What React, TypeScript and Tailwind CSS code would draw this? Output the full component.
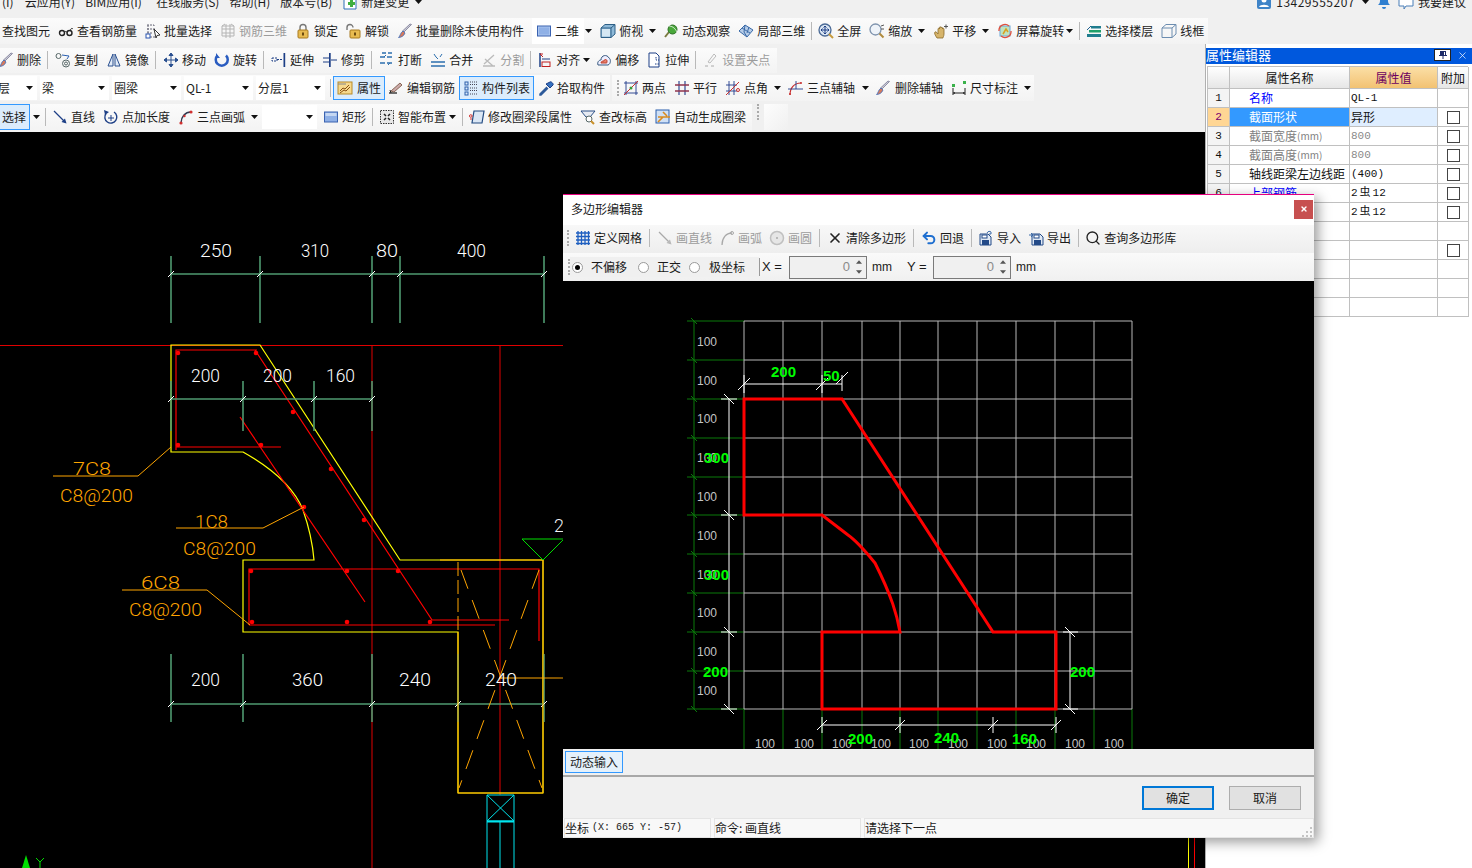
import React from "react";
import { X as XIcon, Search, Undo2 } from "lucide-react";

const S = ({ children, className = "w-4 h-4" }: { children: React.ReactNode; className?: string }) => (
  <svg viewBox="0 0 16 16" className={`${className} shrink-0`} fill="none">{children}</svg>
);

const Ic: Record<string, React.ReactNode> = {
  glasses: <S><circle cx="4" cy="10" r="2.5" stroke="#222" strokeWidth="1.4" /><circle cx="11.5" cy="10" r="2.5" stroke="#222" strokeWidth="1.4" /><path d="M6.5 9.5C8 8 8 8 9 9.5M12 8C13 5 14 5 15 6" stroke="#222" /></S>,
  batch: <S><path d="M2 2h7v2M2 6h9M2 10h5M2 14h9M3 2v12" stroke="#667" strokeDasharray="2 1" /><rect x="1" y="11" width="4" height="4" fill="#fff" stroke="#2a55b0" /><path d="M9 6l6 6-3 .5-1 2.5z" fill="#fff" stroke="#333" /></S>,
  grid3d: <S><path d="M2 3h12v10H2zM6 1v14M10 1v14M2 6h12M2 10h12M2 3l3-2M14 3l-3-2" stroke="#b5b5b5" /></S>,
  lock: <S><path d="M5 7V4.5a3 3 0 016 0V7" stroke="#777" strokeWidth="1.4" /><rect x="3" y="7" width="10" height="8" rx="1" fill="#e8bb50" stroke="#a87a20" /><rect x="7" y="9.5" width="2" height="3" fill="#6b4a10" /></S>,
  unlock: <S><path d="M1 7V4.5a3 3 0 016 0" stroke="#777" strokeWidth="1.4" /><rect x="4" y="7" width="10" height="8" rx="1" fill="#e8bb50" stroke="#a87a20" /><rect x="8" y="9.5" width="2" height="3" fill="#6b4a10" /></S>,
  brush: <S><path d="M14.5 1.5L7 9l-1.5-1L13 1z" fill="#c9c9d6" stroke="#6b6b88" strokeWidth=".7" /><path d="M6 8l2 2c-1 3-4 4.5-6.5 4.5C3.5 13 3 10 6 8z" fill="#d77a5c" stroke="#3c6fbe" strokeWidth=".8" /></S>,
  box2d: <S><rect x="1.5" y="3" width="13" height="10" fill="#a9c4ef" stroke="#3a62b0" /><rect x="3" y="4.5" width="10" height="7" fill="#8fb0e6" /></S>,
  cube: <S><path d="M1 5l4-3.500h10V11l-4 3.500H1z" fill="#8eb9d8" stroke="#2d5f86" /><path d="M1 5h10v9.500M11 5l4-3.500" stroke="#2d5f86" /><rect x="2" y="6" width="8" height="7.500" fill="#d5e7f3" /></S>,
  orbit: <S><path d="M2 14L6 9" stroke="#7a7a40" strokeWidth="2" /><circle cx="9.5" cy="6.5" r="4.5" fill="#49a83b" stroke="#2d6e25" /><path d="M6 3c3 0 6 2 8 6" stroke="#fff" strokeWidth=".8" /></S>,
  local3d: <S><path d="M1 8l6-6 8 5-6 7z" fill="#b7cde8" stroke="#3a6aa8" /><path d="M4 5l8 5M7 2l-1 7 3 5M11 4l-2 6" stroke="#3a6aa8" /></S>,
  fullscreen: <S><circle cx="7" cy="7" r="6" fill="#dbe6f3" stroke="#4b6a96" strokeWidth="1.3" /><path d="M7 3v8M3 7h8M5.5 4.5L7 3l1.5 1.5M5.5 9.5L7 11l1.5-1.5M4.5 5.5L3 7l1.5 1.5M9.5 5.5L11 7l-1.5 1.5" stroke="#1d3f86" /><path d="M11 11l4 4" stroke="#c79a3c" strokeWidth="2" /></S>,
  zoom: <S><circle cx="6.5" cy="6.5" r="5.5" fill="#eef3f9" stroke="#7e93ad" strokeWidth="1.3" /><path d="M10.5 10.5l4 4" stroke="#b08a3c" strokeWidth="2" /><path d="M12 3l3-1M12 6h3" stroke="#555" /></S>,
  pan: <S><path d="M4 15C2 12 1 10 2 9s2 1 3 2V6c0-1 1.500-1 1.500 0V4.500c0-1 1.500-1 1.500 0V5c0-1 1.500-1 1.500 0v1c0-1 1.500-1 1.500 0v5c0 2-1 3-1 4z" fill="#d6b46a" stroke="#8a6a28" strokeWidth=".8" /><path d="M11 3.500h4M13 1.500v4" stroke="#555" /></S>,
  rotscreen: <S><rect x="3" y="3" width="10" height="10" fill="#bfe3bf" stroke="#6aa5d8" /><path d="M6 11l3-5 2 3" stroke="#d8a020" strokeWidth="1.500" /><path d="M2 8a6 6 0 0110-5M14 8a6 6 0 01-10 5" stroke="#e0503c" strokeWidth="1.300" /></S>,
  floors: <S><path d="M1 11h14v3H1z" fill="#1f7d8e" /><path d="M3 7h12v2.500H3z" fill="#1fa06a" /><path d="M5 3h10v2.500H5z" fill="#1f7d8e" /><path d="M1 7l4-4" stroke="#1f5f8e" /></S>,
  wire: <S><path d="M1 5l4-3.500h10V11l-4 3.500H1zM1 5h10v9.500M11 5l4-3.500" stroke="#6c8db0" /></S>,
  copy: <S><circle cx="3.500" cy="4" r="2.500" stroke="#566" /><circle cx="11" cy="11.500" r="3.500" stroke="#566" /><circle cx="11" cy="11.500" r="1.500" stroke="#566" /><path d="M7 3l7 1-2 3" stroke="#2a5fb0" /></S>,
  mirror: <S><path d="M7 2L2 14h5zM9 2l5 12H9z" stroke="#2a5090" fill="#e3ecf8" /></S>,
  move: <S><path d="M8 1v14M1 8h14M8 1L6 3.500h4zM8 15l-2-2.500h4zM1 8l2.500-2v4zM15 8l-2.500-2v4z" stroke="#2a5090" fill="#2a5090" /></S>,
  rot: <S><path d="M12 3.500a6 6 0 11-8.500 0" stroke="#2a5cc0" strokeWidth="2.500" /><path d="M2 1v5h4z" fill="#2a5cc0" /></S>,
  extend: <S><rect x="12.500" y="1" width="1.700" height="14" fill="#1d3f86" /><path d="M1 6h5v3H1zM6 7.500h6" stroke="#1d3f86" strokeDasharray="2 1" /></S>,
  trim: <S><rect x="7" y="1" width="1.700" height="14" fill="#1d3f86" /><path d="M1 6h6M1 10h6M9 8h6" stroke="#1d3f86" /></S>,
  break: <S><path d="M1 5h14M1 11h14M3 1h4M9 1h4" stroke="#2c6fae" strokeWidth="1.300" strokeDasharray="5 2" /><path d="M7 3l-2 2M9 13l2-2" stroke="#2c6fae" /></S>,
  merge: <S><path d="M1 10h14M1 14h14" stroke="#2c6fae" strokeWidth="1.300" /><path d="M4 2l2 3M12 2l-2 3M6 5l2 2" stroke="#2c6fae" /></S>,
  split: <S><path d="M2 14h12M3 12L13 3M4 7l8 7" stroke="#bbb" strokeWidth="1.300" /></S>,
  align: <S><path d="M3 1v14" stroke="#1d3f86" strokeWidth="1.500" /><path d="M6 5l-3-3M3 2l3 0" stroke="#c02020" /><rect x="5" y="10" width="8" height="4.500" stroke="#c02020" /><path d="M5 7h8" stroke="#1d3f86" /></S>,
  offset: <S><path d="M2 13c-1-3 1-5 3-5 0-5 6-6 8-2 2 1 2 6-1 7z" stroke="#385a80" fill="#eef" /><path d="M5 11c0-2 2-2 3-2 0-2 3-2 3 0s0 2-1 2z" fill="#e8806a" stroke="#c04030" /></S>,
  stretch: <S><path d="M3 1h7l3 3v11H3z" stroke="#1d3f86" fill="#fff" /><path d="M10 5v3h3M9 12h4" stroke="#1d3f86" strokeDasharray="1.500 1" /></S>,
  grippt: <S><path d="M2 14h3M8 14h3" stroke="#aaa" /><path d="M11 2l-6 8 2 1 6-7z" stroke="#bbb" /></S>,
  attr: <S><rect x="1" y="2" width="14" height="12" fill="#f6d98d" stroke="#b88a28" /><path d="M3 11l3-3 2 1 4-4M3 13l4-3 2 1 4-4" stroke="#8a5010" /><path d="M1 4h8" stroke="#888" /></S>,
  editbar: <S><path d="M1 13h8" stroke="#222" strokeWidth="1.300" /><path d="M3 11l9-8 2 2-8 7z" fill="#caa" stroke="#865" /><path d="M2 10l1 3" stroke="#222" /></S>,
  list: <S><rect x="2" y="2" width="3" height="3" stroke="#2c5faa" /><rect x="2" y="7" width="3" height="3" stroke="#2c5faa" /><rect x="2" y="12" width="3" height="3" stroke="#2c5faa" /><path d="M7 2h7M7 4.500h7M7 8h7M7 10.500h7M7 14h7" stroke="#445" strokeDasharray="1 1" /></S>,
  pick: <S><path d="M9 7l-7 7v1h1l7-7" stroke="#2d5a9a" strokeWidth="1.500" /><path d="M8 4l4 4 3-3c1-1-2-4-3-3z" fill="#3672c0" stroke="#1d3f86" /></S>,
  twopt: <S><path d="M3 1v14M13 1v14M1 3h14M1 13h14" stroke="#203a8a" strokeWidth=".9" /><path d="M1 15L15 1" stroke="#c83030" /><circle cx="8" cy="8" r="1.500" fill="#3a9a3a" /></S>,
  para: <S><path d="M5 1v14M11 1v14M1 5h14M1 11h14" stroke="#203a8a" strokeWidth="1.100" /><path d="M1 5h14M1 11h14" stroke="#c83030" /></S>,
  angle: <S><path d="M4 1v14M9 1v14M1 5h11M1 11h11" stroke="#203a8a" strokeWidth=".9" /><path d="M1 15L14 2" stroke="#c83030" /><circle cx="13" cy="10" r="1.500" stroke="#c83030" /></S>,
  arc3: <S><path d="M3 15C3 8 7 3 14 3" stroke="#c83030" strokeWidth="1.200" /><path d="M1 9h15M9 1v8" stroke="#203a8a" strokeWidth=".9" /><circle cx="3" cy="14" r="1" fill="#c83030" /><circle cx="14" cy="3" r="1" fill="#c83030" /></S>,
  dim: <S><path d="M2 8v7M14 8v7M2 13h12" stroke="#222" /><path d="M2 13l2-1v2zM14 13l-2-1v2z" fill="#222" /><rect x="1" y="4" width="3" height="3" fill="#3ab24a" /><rect x="12" y="1" width="3" height="3" fill="#3ab24a" /></S>,
  line: <S><path d="M2 2l11 11" stroke="#1d3f86" strokeWidth="1.300" /><path d="M14.500 14.500l-5-1.500 3.500-3.500z" fill="#1d3f86" /></S>,
  addlen: <S><path d="M11 3a6 6 0 11-8 1.500" stroke="#1d3f86" strokeWidth="1.400" /><path d="M1 1l1 5 4-3z" fill="#1d3f86" /><path d="M8 6v6M5 9h6" stroke="#1d3f86" /></S>,
  arcred: <S><path d="M3 14C3 8 7 3 13 3" stroke="#303a50" strokeWidth="1.400" /><circle cx="3" cy="14" r="1.600" fill="#d03030" /><circle cx="13" cy="3" r="1.600" fill="#d03030" /><circle cx="6.500" cy="7" r="1.200" fill="#d03030" /></S>,
  rect: <S><rect x="1.500" y="3" width="13" height="10" fill="#8fb0e6" stroke="#3a62b0" /><rect x="2.500" y="4" width="11" height="3" fill="#c5d7f2" /></S>,
  smart: <S><rect x="1.500" y="1.500" width="13" height="13" fill="#e8e8e8" stroke="#333" strokeDasharray="1.500 1" /><path d="M5 5l2 2M11 5L9 7M5 11l2-2M11 11L9 9" stroke="#222" strokeWidth="1.500" /></S>,
  modbeam: <S><path d="M5 2h10l-2 12H3z" fill="#dbe7f5" stroke="#224a80" strokeWidth="1.200" /><circle cx="1.800" cy="7" r="1.300" stroke="#d03030" /><path d="M1 10h2" stroke="#d03030" /></S>,
  elev: <S><path d="M1 2h14l-5 6H6z" fill="#e6eaf2" stroke="#2a4f86" /><circle cx="9" cy="10" r="3" fill="#fff" stroke="#566" /><path d="M11 12l3 3" stroke="#c9902a" strokeWidth="2" /></S>,
  auto: <S><rect x="1" y="1" width="13" height="13" fill="#cfe0f5" stroke="#2a5fae" /><path d="M3 8h12M8 3l4 4M3 13l5-5" stroke="#d88a20" strokeWidth="1.600" /></S>,
  gridBlue: <S><path d="M3 1v14M6.500 1v14M10 1v14M13.500 1v14M1 3h14M1 6.500h14M1 10h14M1 13.500h14" stroke="#1f5fc0" strokeWidth="1.300" /></S>,
  lineGray: <S><path d="M2 2l11 11" stroke="#a9a9a9" strokeWidth="1.300" /><path d="M14.500 14.500l-5-1.500 3.500-3.500z" fill="#b9b9b9" /></S>,
  arcGray: <S><path d="M3 15C3 8 7 3 13 3" stroke="#a9a9a9" strokeWidth="1.300" /><circle cx="13" cy="3" r="1.500" stroke="#a9a9a9" /></S>,
  circGray: <S><circle cx="8" cy="8" r="6.500" fill="#e6e6e6" stroke="#c0c0c0" strokeWidth="1.500" /><circle cx="8" cy="8" r="1" fill="#aaa" /></S>,
  imp: <S><path d="M2 4h8l3 3v8H2z" fill="#dfe8f4" stroke="#234a88" /><rect x="4" y="10" width="7" height="5" fill="#234a88" /><rect x="4" y="5" width="5" height="3" fill="#fff" stroke="#234a88" /><path d="M9 3c1-2 3-2 4-1M13 2v2h-2" stroke="#3a6aa8" /></S>,
  exp: <S><path d="M4 4h8l3 3v8H4z" fill="#dfe8f4" stroke="#234a88" /><rect x="6" y="10" width="7" height="5" fill="#234a88" /><rect x="6" y="5" width="5" height="3" fill="#fff" stroke="#234a88" /><path d="M1 5h4M3 3l2 2-2 2" stroke="#3a6aa8" /></S>,
  user: <S><rect x="1" y="1" width="14" height="14" rx="2" fill="#3f84c8" /><circle cx="8" cy="6" r="2.500" fill="#fff" /><path d="M3 13c1-3 9-3 10 0z" fill="#fff" /></S>,
  bell: <S><path d="M8 1c-3 0-4 3-4 6 0 2-1 3-2 4h12c-1-1-2-2-2-4 0-3-1-6-4-6z" fill="#2f7fd0" /><path d="M6 13a2 2 0 004 0z" fill="#2f7fd0" /></S>,
  chat: <S><path d="M1 2h14v10H8l-2 3v-3H1z" fill="#fff" stroke="#4a7fb8" /></S>,
  newc: <S><path d="M2 1h10l2 2v12H2z" fill="#fff" stroke="#2f6fb8" /><path d="M8 6l3 0v2h2v3h-2v2H8v-2H6V8h2z" fill="#3fae3f" /></S>,
};

const Caret = ({ className = "ml-[3px]" }: { className?: string }) => (
  <svg viewBox="0 0 7 4" className={`w-[7px] h-[4px] shrink-0 ${className}`}><path d="M0 0h7L3.500 4z" fill="#111" /></svg>
);

const Sep = () => <div className="w-px h-[18px] bg-[#b9b9b9] shrink-0 -mx-[2px]" />;
const DSep = () => <div className="w-px h-[18px] bg-[#b9b9b9] shrink-0" />;
const Grip = () => <div className="w-[2px] h-[16px] shrink-0 border-l-2 border-dotted border-[#aaa]" />;

function Item({ icon, text, gray, caret, tight, className = "" }: { icon?: string; text: string; gray?: boolean; caret?: boolean; tight?: boolean; className?: string }) {
  return (
    <div className={`flex items-center gap-[3px] shrink-0 ${className}`}>
      {icon && Ic[icon]}
      <span className={gray ? "text-[#9c9c9c]" : ""}>{text}</span>
      {caret && <Caret className={tight ? "" : "ml-[3px]"} />}
    </div>
  );
}

const Combo = ({ text, className = "w-[69px]" }: { text: string; className?: string }) => (
  <div className={`flex items-center justify-between h-[24px] bg-white pl-[2px] pr-[4px] shrink-0 ${className}`}>
    <span>{text}</span>
    <Caret className="" />
  </div>
);

const strip = "flex items-center bg-gradient-to-b from-[#fbfbfb] to-[#f3f3f3]";

function CadT({ x0, x1, y, t, c = "fill-white" }: { x0: number; x1: number; y: number; t: string; c?: string }) {
  return <text x={x0} y={y} textLength={x1 - x0} lengthAdjust="spacingAndGlyphs" className={`${c} text-[19px] font-light font-['Roboto',sans-serif]`}>{t}</text>;
}

function DimRow({ xs, top, bottom, y }: { xs: number[]; top: number; bottom: number; y: number }) {
  return (
    <g>
      <path d={`M${xs[0]} ${y}H${xs[xs.length - 1]}`} stroke="#4f9a70" strokeWidth="1.600" />
      {xs.map((x) => (
        <g key={x}>
          <path d={`M${x} ${top}V${bottom}`} stroke="#4f9a70" strokeWidth="1.600" />
          <path d={`M${x - 3} ${y + 3}L${x + 3} ${y - 3}`} stroke="#fff" />
        </g>
      ))}
    </g>
  );
}

function CadCanvas() {
  const dots = [[178, 353], [256, 353], [178, 445], [261, 445], [293, 412], [331, 469], [364, 520], [304, 507], [251, 571], [347, 571], [398, 571], [252, 622], [347, 622], [430, 622]];
  return (
    <svg viewBox="0 132 1205 736" className="w-full h-full block" fill="none">
      <DimRow xs={[171, 260, 372, 400, 544]} top={256} bottom={323} y={274} />
      <CadT x0={200} x1={232} y={257} t="250" />
      <CadT x0={301} x1={329} y={257} t="310" />
      <CadT x0={376} x1={398} y={257} t="80" />
      <CadT x0={457} x1={486} y={257} t="400" />
      <path d="M0 345.500H563M372 345V868M500 345V795" stroke="#e00000" />
      <path d="M171 345H260L400 560H543V793H458V632H243V560H314C313 548 310 530 303 510C295 490 275 470 243 452H171Z" stroke="#ff0" strokeWidth="1.200" />
      <path d="M176 450V350H257M176 447H281M255 350L432 620M240 417L365 602M432 620H509M249 625V569H539V641M249 625H495" stroke="#f00" strokeWidth="1.200" />
      {dots.map(([x, y]) => <circle key={`${x}-${y}`} cx={x} cy={y} r="2.300" fill="#f00" />)}
      <DimRow xs={[171, 243, 314, 372]} top={381} bottom={431} y={399} />
      <CadT x0={191} x1={220} y={382} t="200" />
      <CadT x0={263} x1={292} y={382} t="200" />
      <CadT x0={326} x1={355} y={382} t="160" />
      <DimRow xs={[171, 243, 372, 458, 544]} top={654} bottom={722} y={704} />
      <path d="M461 570L542 788M539 570L459 788" stroke="#ffa500" strokeDasharray="20 12" />
      <path d="M458 562V632" stroke="#ffa500" strokeDasharray="14 4" />
      <path d="M458 632V793H543V560H440" stroke="#ffb000" />
      <path d="M500 678H563" stroke="#ffa500" />
      <CadT x0={191} x1={220} y={686} t="200" />
      <CadT x0={292} x1={323} y={686} t="360" />
      <CadT x0={399} x1={431} y={686} t="240" />
      <CadT x0={485} x1={517} y={686} t="240" />
      <path d="M53 476H138L171 447M176 528H263L304 507M122 590H207L250 625" stroke="#ffa500" />
      <CadT x0={73} x1={111} y={475} t="7C8" c="fill-[#ffa500]" />
      <CadT x0={60} x1={133} y={502} t="C8@200" c="fill-[#ffa500]" />
      <CadT x0={195} x1={228} y={528} t="1C8" c="fill-[#ffa500]" />
      <CadT x0={183} x1={256} y={555} t="C8@200" c="fill-[#ffa500]" />
      <CadT x0={141} x1={180} y={589} t="6C8" c="fill-[#ffa500]" />
      <CadT x0={129} x1={202} y={616} t="C8@200" c="fill-[#ffa500]" />
      <path d="M522 539H563M522 539L543 560L563 540" stroke="#00e000" />
      <CadT x0={554} x1={564} y={532} t="2" />
      <path d="M487 795H514V821H487ZM487 795L514 821M514 795L487 821" stroke="#00e5ee" />
      <path d="M487 821.500H514" stroke="#00e5ee" strokeWidth="2" />
      <path d="M487 821V868M500 821V868M514 821V868" stroke="#00e5ee" />
      <path d="M26 855L22 868H30Z" fill="#00e000" />
      <path d="M36 858L40 862L44 858M40 862V868" stroke="#00e000" />
      <path d="M1188.500 838V868" stroke="#ff0" />
      <path d="M1194.500 838V868" stroke="#f00" />
    </svg>
  );
}

function PolyCanvas() {
  const vx = [744, 783, 822, 862, 900, 938, 977, 1016, 1055, 1094, 1132];
  const hy = [321, 360, 399, 438, 477, 515, 554, 593, 632, 671, 709];
  const leftLabel = [341, 380, 418, 457, 496, 535, 574, 612, 651, 690];
  const botLabel = [765, 804, 842, 881, 919, 958, 997, 1036, 1075, 1114];
  const slash = (x: number, y: number, r = 5) => `M${x - r} ${y + r}L${x + r} ${y - r}`;
  const bs = (x: number, y: number, r = 5) => `M${x - r} ${y - r}L${x + r} ${y + r}`;
  return (
    <svg viewBox="563 281 751 468" className="w-full h-full block" fill="none">
      <path d={`M694 321V709 ${hy.map((y) => `M687 ${y}H744`).join("")}`} stroke="#0a7a0a" />
      {hy.map((y) => <path key={y} d={bs(694, y, 3)} stroke="#0a7a0a" />)}
      <path d={vx.map((x) => `M${x} 709V749`).join("")} stroke="#0a7a0a" />
      <path d={vx.map((x) => `M${x} 321V709`).join("") + hy.map((y) => `M744 ${y}H1132`).join("")} stroke="#b8b8b8" />
      {leftLabel.map((y) => <text key={y} x={697} y={y + 5} className="fill-[#c4c4c4] text-[12px] font-['Liberation_Sans',sans-serif]">100</text>)}
      {botLabel.map((x) => <text key={x} x={x - 10} y={748} className="fill-[#c4c4c4] text-[12px] font-['Liberation_Sans',sans-serif]">100</text>)}
      <path d="M744 399H842L993 632H1056V709H822V632H900C897 615 892 597 875 563C866 552 858 542 848 535L822 515H744Z" stroke="#f00" strokeWidth="3" />
      <path d="M744 384H842M744 375V393M822 375V393M842 375V391" stroke="#fff" />
      <path d={slash(744, 384, 6) + slash(822, 384, 6) + slash(842, 378, 6)} stroke="#fff" />
      <path d="M729 399V709M721 399H737M721 515H737M721 632H737M721 709H737" stroke="#fff" />
      <path d={bs(729, 399) + bs(729, 515) + bs(729, 632) + bs(729, 709)} stroke="#fff" />
      <path d="M1070 632V709M1063 632H1078M1063 709H1078" stroke="#fff" />
      <path d={bs(1070, 632) + bs(1070, 709)} stroke="#fff" />
      <path d="M822 725H1056M822 717V733M900 717V733M993 717V733M1056 717V733" stroke="#fff" />
      <path d={slash(822, 725) + slash(900, 725) + slash(993, 725) + slash(1056, 725)} stroke="#fff" />
      {([[771, 377, "200"], [823, 381, "50"], [704, 463, "300"], [704, 580, "300"], [703, 677, "200"], [1070, 677, "200"], [848, 744, "200"], [934, 743, "240"], [1012, 744, "160"]] as [number, number, string][]).map(([x, y, t], i) => (
        <text key={i} x={x} y={y} className="fill-[#00ff00] text-[15px] font-bold font-['Liberation_Sans',sans-serif]">{t}</text>
      ))}
    </svg>
  );
}

function Radio({ on }: { on?: boolean }) {
  return (
    <span className="w-[11px] h-[11px] rounded-full border border-[#9a9a9a] bg-white flex items-center justify-center shrink-0">
      {on && <span className="w-[5px] h-[5px] rounded-full bg-black" />}
    </span>
  );
}

function Spin() {
  return (
    <div className="flex items-center justify-end w-[78px] h-[23px] border border-[#7a7a7a] bg-[#f0f0f0] pr-[4px] shrink-0">
      <span className="text-[#8a8a8a] text-[13px] font-['Liberation_Sans',sans-serif] mr-[6px]">0</span>
      <div className="flex flex-col gap-[6px]">
        <svg viewBox="0 0 7 4" className="w-[6px] h-[4px]"><path d="M0 4h7L3.500 0z" fill="#555" /></svg>
        <svg viewBox="0 0 7 4" className="w-[6px] h-[4px]"><path d="M0 0h7L3.500 4z" fill="#555" /></svg>
      </div>
    </div>
  );
}

function Dialog() {
  return (
    <div className="absolute left-[563px] top-[194px] w-[751px] h-[644px] flex flex-col bg-[#f0f0f0] border-t border-t-[#e6007e] shadow-[4px_4px_12px_rgba(0,0,0,0.4)] text-[12px] text-[#1a1a1a]">
      <div className="h-[30px] bg-white flex items-center justify-between pl-[8px] pr-[1px] pb-[2px] shrink-0">
        <span>多边形编辑器</span>
        <div className="w-[19px] h-[19px] bg-[#c75050] text-white flex items-center justify-center">
          <XIcon size={8} strokeWidth={4} />
        </div>
      </div>
      <div className="h-[28px] shrink-0 flex items-center gap-[7px] pl-[4px] pb-[2px] bg-gradient-to-b from-[#f8f8f8] to-[#eeeeee]">
        <Grip />
        <Item icon="gridBlue" text="定义网格" className="-ml-[1px]" />
        <DSep />
        <Item icon="lineGray" text="画直线" gray />
        <Item icon="arcGray" text="画弧" gray />
        <Item icon="circGray" text="画圆" gray />
        <DSep />
        <div className="flex items-center gap-[3px] shrink-0"><XIcon size={16} strokeWidth={2.5} className="text-[#222]" /><span>清除多边形</span></div>
        <DSep />
        <div className="flex items-center gap-[3px] shrink-0"><Undo2 size={16} strokeWidth={3} className="text-[#1f6fd0]" /><span>回退</span></div>
        <DSep />
        <Item icon="imp" text="导入" className="-ml-[1px] gap-[2px]" />
        <Item icon="exp" text="导出" className="gap-[2px]" />
        <DSep />
        <div className="flex items-center gap-[3px] shrink-0 -ml-[1px]"><Search size={16} strokeWidth={2} className="text-[#222]" /><span>查询多边形库</span></div>
      </div>
      <div className="h-[28px] shrink-0 flex items-center pl-[5px] bg-gradient-to-b from-[#fafafa] to-[#f0f0f0]">
        <Grip />
        <div className="flex items-center w-[189px] h-[20px] bg-[#f0f0f0] pl-[2px]">
          <Radio on />
          <span className="ml-[8px]">不偏移</span>
          <span className="ml-[11px]"><Radio /></span>
          <span className="ml-[8px]">正交</span>
          <span className="ml-[8px]"><Radio /></span>
          <span className="ml-[9px]">极坐标</span>
        </div>
        <div className="w-px h-[18px] bg-[#999]" />
        <span className="ml-[2px] w-[27px] text-[13px] font-['Liberation_Sans',sans-serif]">X =</span>
        <Spin />
        <span className="ml-[5px] w-[35px] font-['Liberation_Sans',sans-serif]">mm</span>
        <span className="w-[26px] text-[13px] font-['Liberation_Sans',sans-serif]">Y =</span>
        <Spin />
        <span className="ml-[5px] font-['Liberation_Sans',sans-serif]">mm</span>
      </div>
      <div className="flex-1 bg-black min-h-0 overflow-hidden"><PolyCanvas /></div>
      <div className="h-[28px] shrink-0 flex items-center pl-[2px] border-b-2 border-[#a8a8a8]">
        <div className="w-[58px] h-[22px] bg-[#e5f1fb] border border-[#3399ff] flex items-center justify-center">动态输入</div>
      </div>
      <div className="h-[41px] shrink-0 flex items-center justify-end gap-[15px] pr-[13px]">
        <button className="w-[72px] h-[24px] bg-[#e1e1e1] border-2 border-[#0078d7]">确定</button>
        <button className="w-[72px] h-[24px] bg-[#e1e1e1] border border-[#adadad]">取消</button>
      </div>
      <div className="h-[20px] shrink-0 flex gap-[3px] pl-[1px] bg-[#f8f8f8]">
        <div className="w-[147px] border border-[#e4e4e4] flex items-center gap-[3px]"><span>坐标</span><span className="font-['Liberation_Mono',monospace] text-[10px]">(X: 665 Y: -57)</span></div>
        <div className="w-[147px] border border-[#e4e4e4] flex items-center">命令: 画直线</div>
        <div className="flex-1 border border-[#e4e4e4] flex items-center justify-between pr-[1px]">
          <span>请选择下一点</span>
          <svg viewBox="0 0 10 10" className="w-[10px] h-[10px] self-end"><path d="M8 0h2v2H8zM4 4h2v2H4zM8 4h2v2H8zM0 8h2v2H0zM4 8h2v2H4zM8 8h2v2H8z" fill="#c4c4c4" /></svg>
        </div>
      </div>
    </div>
  );
}

const Check = () => <span className="block w-[13px] h-[13px] border border-[#444] bg-white" />;

type Row = { n: string; name: React.ReactNode; val: React.ReactNode; nc?: string; vc?: string; check?: boolean; sel?: boolean };

function PropTable() {
  const mm = <span className="text-[10px]">(mm)</span>;
  const rebar = <>2<span className="mx-[2px]">虫</span>12</>;
  const rows: Row[] = [
    { n: "1", name: "名称", nc: "text-[#0000ff]", val: "QL-1", vc: "font-['Liberation_Mono',monospace] text-[11px]" },
    { n: "2", name: "截面形状", val: "异形", check: true, sel: true },
    { n: "3", name: <>截面宽度{mm}</>, nc: "text-[#808080]", val: "800", vc: "text-[#8a8a8a] text-[11px] font-['Liberation_Mono',monospace]", check: true },
    { n: "4", name: <>截面高度{mm}</>, nc: "text-[#808080]", val: "800", vc: "text-[#8a8a8a] text-[11px] font-['Liberation_Mono',monospace]", check: true },
    { n: "5", name: "轴线距梁左边线距", val: "(400)", vc: "font-['Liberation_Mono',monospace] text-[11px]", check: true },
    { n: "6", name: "上部钢筋", nc: "text-[#0000ff]", val: rebar, vc: "font-['Liberation_Mono','Noto_Sans_CJK_SC',monospace] text-[11px]", check: true },
    { n: "7", name: "下部钢筋", nc: "text-[#0000ff]", val: rebar, vc: "font-['Liberation_Mono','Noto_Sans_CJK_SC',monospace] text-[11px]", check: true },
    { n: "8", name: "", val: "" },
    { n: "9", name: "", val: "", check: true },
    { n: "10", name: "", val: "" },
    { n: "11", name: "", val: "" },
    { n: "12", name: "", val: "" },
  ];
  const cell = "border-r border-b border-[#c0c0c0] flex items-center";
  return (
    <div className="ml-[1px] mt-[2px] w-[261px] border-l border-t border-[#c0c0c0] text-[12px] text-[#111]">
      <div className="grid grid-cols-[22px_120px_88px_31px] h-[22px]">
        <div className={`${cell} bg-gradient-to-b from-white to-[#e6e6e6]`} />
        <div className={`${cell} justify-center bg-gradient-to-b from-white to-[#e6e6e6]`}>属性名称</div>
        <div className={`${cell} justify-center text-[#6b0060] bg-gradient-to-b from-[#fbdfa6] to-[#f2c272]`}>属性值</div>
        <div className={`${cell} justify-center bg-gradient-to-b from-white to-[#e6e6e6]`}>附加</div>
      </div>
      {rows.map((r) => (
        <div key={r.n} className="grid grid-cols-[22px_120px_88px_31px] h-[19px]">
          <div className={`${cell} justify-center text-[11px] font-['Liberation_Mono',monospace] ${r.sel ? "bg-[#ffd694] text-[#7a0070]" : "bg-[#f4f4f4]"}`}>{Number(r.n) > 7 ? "" : r.n}</div>
          <div className={`${cell} pl-[19px] whitespace-nowrap overflow-hidden ${r.sel ? "bg-[#3399ff] text-white" : "bg-white"} ${r.nc ?? ""}`}>{r.name}</div>
          <div className={`${cell} pl-[1px] ${r.sel ? "bg-[#dfeeff]" : "bg-white"} ${r.vc ?? ""}`}>{r.val}</div>
          <div className={`${cell} justify-center bg-white`}>{r.check && <Check />}</div>
        </div>
      ))}
    </div>
  );
}

export default function App() {
  return (
    <div className="relative w-[1472px] h-[868px] overflow-hidden bg-[#f0f0f0] flex flex-col text-[12px] leading-[16px] text-[#1c1c1c] font-['Noto_Sans_CJK_SC','Liberation_Sans',sans-serif]">
      {/* menu */}
      <div className="h-[18px] shrink-0 flex items-start justify-between overflow-hidden">
        <div className="flex items-center gap-[10px] -mt-[6px] pl-[2px]">
          <span className="mr-[1px]">(I)</span>
          <span>云应用(Y)</span>
          <span className="w-[61px]">BIM应用(I)</span>
          <span>在线服务(S)</span>
          <span>帮助(H)</span>
          <span>版本号(B)</span>
          <Item icon="newc" text="新建变更" caret />
        </div>
        <div className="flex items-center -mt-[6px] pr-[6px]">
          <div className="flex items-center gap-[4px] shrink-0">{Ic.user}<span className="tracking-[0.5px]">13429555207</span><Caret className="ml-[3px]" /></div>
          <span className="ml-[7px]">{Ic.bell}</span>
          <Item icon="chat" text="我要建议" className="ml-[6px] gap-[4px]" />
        </div>
      </div>
      {/* row 1 */}
      <div className={`${strip} h-[26px] w-[1208px] shrink-0 gap-[8px] pl-[2px] overflow-hidden`}>
        <Item text="查找图元" />
        <Item icon="glasses" text="查看钢筋量" />
        <Item icon="batch" text="批量选择" />
        <Item icon="grid3d" text="钢筋三维" gray />
        <Item icon="lock" text="锁定" />
        <Item icon="unlock" text="解锁" />
        <Item icon="brush" text="批量删除未使用构件" />
        <Item icon="box2d" text="二维" className="bg-white h-full pl-[4px] pr-[5px]" />
        <Caret className="-ml-[7px]" />
        <Item icon="cube" text="俯视" caret />
        <Item icon="orbit" text="动态观察" className="-ml-[1px]" />
        <Item icon="local3d" text="局部三维" />
        <Sep />
        <Item icon="fullscreen" text="全屏" />
        <Item icon="zoom" text="缩放" caret />
        <Item icon="pan" text="平移" caret />
        <Item icon="rotscreen" text="屏幕旋转" />
        <Caret className="-ml-[6px]" />
        <Sep />
        <Item icon="floors" text="选择楼层" />
        <Item icon="wire" text="线框" />
      </div>
      <div className="flex-1 min-h-0 flex">
        {/* left: toolbars and canvas */}
        <div className="w-[1205px] shrink-0 flex flex-col">
          <div className="h-[25px] mt-[4px] shrink-0">
            <div className={`${strip} h-full w-[777px] gap-[8px] pb-[2px] overflow-hidden`}>
              <Item icon="brush" text="删除" className="-ml-[2px]" />
              <Sep />
              <Item icon="copy" text="复制" className="ml-[1px]" />
              <Item icon="mirror" text="镜像" />
              <Sep />
              <Item icon="move" text="移动" className="ml-[1px]" />
              <Item icon="rot" text="旋转" />
              <Sep />
              <Item icon="extend" text="延伸" className="ml-[1px]" />
              <Item icon="trim" text="修剪" />
              <Sep />
              <Item icon="break" text="打断" className="ml-[1px]" />
              <Item icon="merge" text="合并" />
              <Item icon="split" text="分割" gray />
              <Sep />
              <Item icon="align" text="对齐" caret tight />
              <Item icon="offset" text="偏移" className="-ml-[2px]" />
              <Item icon="stretch" text="拉伸" className="-ml-[1px]" />
              <Sep />
              <Item icon="grippt" text="设置夹点" gray className="ml-[1px]" />
            </div>
          </div>
          <div className="h-[26px] mt-[2px] shrink-0 flex gap-[2px]">
            <div className={`${strip} h-full w-[610px] overflow-hidden`}>
              <Combo text="楼层" className="w-[37px] -indent-[16px]" />
              <Combo text="梁" className="w-[69px] ml-[3px]" />
              <Combo text="圈梁" className="w-[69px] ml-[3px]" />
              <Combo text="QL-1" className="w-[69px] ml-[3px]" />
              <Combo text="分层1" className="w-[69px] ml-[3px]" />
              <div className="w-px h-[18px] bg-[#b9b9b9] ml-[5px] shrink-0" />
              <div className="ml-[2px] flex items-center gap-[4px] w-[52px] h-[24px] pl-[3px] bg-[#dbecfc] border border-[#3399ff] shrink-0">{Ic.attr}<span>属性</span></div>
              <Item icon="editbar" text="编辑钢筋" className="ml-[3px]" />
              <div className="ml-[4px] flex items-center gap-[3px] w-[75px] h-[24px] pl-[3px] bg-[#dbecfc] border border-[#3399ff] shrink-0">{Ic.list}<span>构件列表</span></div>
              <Item icon="pick" text="拾取构件" className="ml-[4px]" />
            </div>
            <div className={`${strip} h-full w-[422px] gap-[8px] pl-[5px] overflow-hidden`}>
              <Grip />
              <Item icon="twopt" text="两点" className="-ml-[4px]" />
              <Item icon="para" text="平行" />
              <Item icon="angle" text="点角" caret />
              <Item icon="arc3" text="三点辅轴" caret className="-ml-[2px] gap-[4px]" />
              <Item icon="brush" text="删除辅轴" className="-ml-[2px] gap-[4px]" />
              <Item icon="dim" text="尺寸标注" caret />
            </div>
          </div>
          <div className="h-[28px] mt-[3px] shrink-0 flex gap-[5px]">
            <div className={`${strip} h-full w-[752px] gap-[8px] pb-[2px] overflow-hidden`}>
              <div className="-ml-[2px] w-[32px] h-[26px] bg-[#dbecfc] border border-[#3399ff] flex items-center justify-center shrink-0">选择</div>
              <Caret className="-ml-[5px]" />
              <div className="w-px h-[18px] bg-[#b9b9b9] shrink-0 -ml-[3px]" />
              <Item icon="line" text="直线" className="-ml-[2px]" />
              <Item icon="addlen" text="点加长度" />
              <Item icon="arcred" text="三点画弧" caret />
              <Combo text="" className="w-[55px] -ml-[4px]" />
              <Item icon="rect" text="矩形" className="-ml-[2px]" />
              <Sep />
              <Item icon="smart" text="智能布置" caret tight />
              <Sep />
              <Item icon="modbeam" text="修改圈梁段属性" />
              <Item icon="elev" text="查改标高" />
              <Item icon="auto" text="自动生成圈梁" />
            </div>
            <Grip />
            <div className="w-[24px] h-[26px] bg-gradient-to-br from-[#fdfdfd] to-[#f0f0f0] shrink-0" />
          </div>
          <div className="flex-1 min-h-0 bg-black overflow-hidden"><CadCanvas /></div>
        </div>
        {/* right panel */}
        <div className="flex-1 bg-white border-l border-[#b0b0b0]">
          <div className="h-[16px] mt-[4px] pb-[2px] bg-[#0058dd] text-white text-[13px] flex items-center justify-between pr-[4px]">
            <span>属性编辑器</span>
            <div className="flex items-center gap-[6px]">
              <span className="w-[17px] h-[12px] bg-white border border-[#222] flex items-center justify-center">
                <svg viewBox="0 0 8 8" className="w-[8px] h-[8px]"><path d="M1 0h6v4H1zM0 4h8v1H0zM3.500 5h1v3h-1z" fill="#1c2a6a" /><path d="M5 1h1v3H5z" fill="#fff" /></svg>
              </span>
              <XIcon size={11} strokeWidth={1.5} />
            </div>
          </div>
          <PropTable />
        </div>
      </div>
      <Dialog />
    </div>
  );
}
